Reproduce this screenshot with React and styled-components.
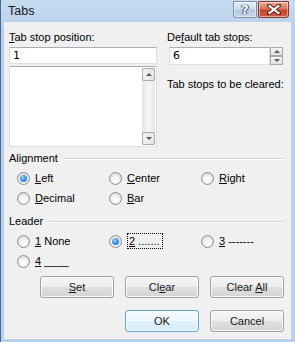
import React from "react";
import styled, { createGlobalStyle } from "styled-components";

const GlobalStyle = createGlobalStyle`
  html, body { margin:0; padding:0; background:#b9d1ea; }
  body {
    font-family: "Liberation Sans", Arial, sans-serif;
    font-size: 11px;
    color: #000;
  }
`;

const alignment = [
  { key: "L", rest: "eft", checked: true },
  { key: "C", rest: "enter" },
  { key: "R", rest: "ight" },
  { key: "D", rest: "ecimal" },
  { key: "B", rest: "ar" },
];

// Tabs dialog
function App() {
  return (
    <>
      <GlobalStyle />
      <Window>
        <TitleBar>
          <Title>Tabs</Title>
          <CaptionButtons>
            <CaptionButton kind="help">
              <HelpMark>?</HelpMark>
            </CaptionButton>
            <CaptionButton kind="close">
              <svg width="14" height="11" viewBox="0 0 14 11">
                <path d="M2 1.5 L12 9.5 M12 1.5 L2 9.5" stroke="#5a2218" strokeWidth="4" strokeLinecap="square" />
                <path d="M2.5 2 L11.5 9 M11.5 2 L2.5 9" stroke="#fff" strokeWidth="2.2" strokeLinecap="square" />
              </svg>
            </CaptionButton>
          </CaptionButtons>
        </TitleBar>

        <Client>
          <TopRow>
            <Column>
              <Label><Key>T</Key>ab stop position:</Label>
              <TextBox>1</TextBox>
              <ListBox>
                <ScrollBar>
                  <ScrollButton><Arrow up /></ScrollButton>
                  <ScrollButton><Arrow /></ScrollButton>
                </ScrollBar>
              </ListBox>
            </Column>
            <Column>
              <Label>De<Key>f</Key>ault tab stops:</Label>
              <Spinner>
                <SpinText>6</SpinText>
                <SpinButtons>
                  <SpinButton><Arrow up /></SpinButton>
                  <SpinButton><Arrow /></SpinButton>
                </SpinButtons>
              </Spinner>
              <Note>Tab stops to be cleared:</Note>
            </Column>
          </TopRow>

          <Group>
            <GroupHeading>Alignment<GroupLine /></GroupHeading>
            <RadioGrid>
              {alignment.map((item) => (
                <RadioItem key={item.key}>
                  <RadioCircle checked={item.checked} />
                  <span><Key>{item.key}</Key>{item.rest}</span>
                </RadioItem>
              ))}
            </RadioGrid>
          </Group>

          <Group leader>
            <GroupHeading>Leader<GroupLine /></GroupHeading>
            <RadioGrid>
              <RadioItem>
                <RadioCircle />
                <span><Key>1</Key> None</span>
              </RadioItem>
              <RadioItem>
                <RadioCircle checked />
                <FocusBox><Key>2</Key> .......</FocusBox>
              </RadioItem>
              <RadioItem>
                <RadioCircle />
                <span><Key>3</Key> -------</span>
              </RadioItem>
              <RadioItem>
                <RadioCircle />
                <span><Key>4</Key> ____</span>
              </RadioItem>
            </RadioGrid>
          </Group>

          <ButtonRow>
            <Button><span><Key>S</Key>et</span></Button>
            <Button><span>Cl<Key>e</Key>ar</span></Button>
            <Button><span>Clear <Key>A</Key>ll</span></Button>
          </ButtonRow>
          <ButtonRow last>
            <Button isDefault>OK</Button>
            <Button>Cancel</Button>
          </ButtonRow>
        </Client>
      </Window>
    </>
  );
}

export default App;

const Window = styled.div`
  width:295px;
  height:342px;
  box-sizing:border-box;
  display:flex;
  flex-direction:column;
  padding:0 4px 3px 3px;
  border-left:1px solid #4a6890;
  background:linear-gradient(#c6daf0, #b9d1ea 30px);
`
const TitleBar = styled.div`
  height:22px;
  display:flex;
  align-items:flex-start;
  justify-content:space-between;
  padding-left:4px;
`
const Title = styled.div`
  font-family:"Liberation Sans", Arial, sans-serif;
  font-size:12.5px;
  line-height:22px;
  color:#1a1a1a;
`
const CaptionButtons = styled.div`
  display:flex;
  gap:1px;
  padding-top:1px;
  margin-right:2px;
`
const CaptionButton = styled.div`
  width:${(p) => (p.kind === "close" ? "31px" : "24px")};
  height:17px;
  box-sizing:border-box;
  display:flex;
  align-items:center;
  justify-content:center;
  border:1px solid ${(p) => (p.kind === "close" ? "#8d3a2c" : "#7f93ab")};
  border-radius:${(p) => (p.kind === "close" ? "0 0 3px 0" : "0 0 0 3px")};
  background:${(p) =>
    p.kind === "close"
      ? "linear-gradient(#eab0a2, #d9735f 45%, #c4442e 55%, #d0604a)"
      : "linear-gradient(#e4edf7, #cddcec 45%, #b5c8de 55%, #c5d6ea)"};
  box-shadow:inset 0 0 0 1px rgba(255,255,255,0.45);
`
const HelpMark = styled.span`
  font-family:"DejaVu Sans", sans-serif;
  font-weight:bold;
  font-size:13px;
  line-height:13px;
  color:#fff;
  text-shadow:0 0 1px #2d3f55, 0 0 1px #2d3f55, 1px 0 0 #4a5e78, -1px 0 0 #4a5e78;
`
const Client = styled.div`
  flex:1;
  background:#f0f0f0;
  padding:8px 7px 0 5px;
  display:flex;
  flex-direction:column;
`
const TopRow = styled.div`
  display:grid;
  grid-template-columns:148px 1fr;
  column-gap:10px;
`
const Column = styled.div`
  display:flex;
  flex-direction:column;
`
const Label = styled.div`
  height:15px;
  line-height:15px;
  margin-bottom:2px;
  white-space:nowrap;
`
const Key = styled.span`
  text-decoration:underline;
  text-underline-offset:1px;
`
const TextBox = styled.div`
  height:17px;
  box-sizing:border-box;
  border:1px solid #dbdfe6;
  border-top-color:#abadb3;
  background:#fff;
  padding-left:3px;
  font-family:"DejaVu Sans", sans-serif;
  font-size:11px;
  line-height:15px;
`
const ListBox = styled.div`
  margin-top:2px;
  height:81px;
  box-sizing:border-box;
  border:1px solid #dbdfe6;
  border-top-color:#abadb3;
  background:#fff;
  display:flex;
  justify-content:flex-end;
  padding:1px;
`
const ScrollBar = styled.div`
  width:13px;
  display:flex;
  flex-direction:column;
  justify-content:space-between;
  background:linear-gradient(90deg, #e3e3e3, #f3f3f3 40%, #f3f3f3 60%, #e6e6e6);
`
const ScrollButton = styled.div`
  height:13px;
  box-sizing:border-box;
  border:1px solid #a8a8a8;
  border-radius:2px;
  background:linear-gradient(90deg, #f2f2f2, #e6e6e6);
  display:flex;
  align-items:center;
  justify-content:center;
`
const Arrow = styled.span`
  width:0;
  height:0;
  border-left:3px solid transparent;
  border-right:3px solid transparent;
  ${(p) => (p.up ? "border-bottom:3px solid #5a5a5a;" : "border-top:3px solid #5a5a5a;")}
`
const Spinner = styled.div`
  display:flex;
  height:18px;
  margin-left:2px;
  margin-right:1px;
`
const SpinText = styled(TextBox)`
  flex:1;
  height:18px;
  line-height:16px;
`
const SpinButtons = styled.div`
  width:13px;
  display:flex;
  flex-direction:column;
`
const SpinButton = styled.div`
  flex:1;
  box-sizing:border-box;
  border:1px solid #a9a9a9;
  background:linear-gradient(#f6f6f6, #e0e0e0);
  display:flex;
  align-items:center;
  justify-content:center;
`
const Note = styled.div`
  margin-top:13px;
  white-space:nowrap;
`
const Group = styled.div`
  margin-top:${(p) => (p.leader ? "6px" : "4px")};
`
const GroupHeading = styled.div`
  display:flex;
  align-items:center;
  gap:6px;
  height:15px;
  line-height:15px;
  margin-bottom:${(p) => (p.leader ? "3px" : "2px")};
`
const GroupLine = styled.div`
  flex:1;
  height:0;
  border-top:1px solid #d5d5d5;
  border-bottom:1px solid #fff;
`
const RadioGrid = styled.div`
  display:grid;
  grid-template-columns:repeat(3, 92px);
  grid-auto-rows:20px;
  padding-left:8px;
  margin-top:2px;
`
const RadioItem = styled.div`
  display:flex;
  align-items:center;
  gap:5px;
  white-space:nowrap;
`
const RadioCircle = styled.span`
  width:13px;
  height:13px;
  box-sizing:border-box;
  border-radius:50%;
  border:1px solid #8f8f8f;
  background:radial-gradient(circle at 50% 60%, #ffffff 20%, #e6e6e6 60%, #cfcfcf 100%);
  display:flex;
  align-items:center;
  justify-content:center;
  &::after {
    content:"";
    display:${(p) => (p.checked ? "block" : "none")};
    width:7px;
    height:7px;
    border-radius:50%;
    background:radial-gradient(circle at 40% 35%, #9fd6ff, #2f8ee0 55%, #1a5fa8);
  }
`
const FocusBox = styled.span`
  border:1px dotted #000;
  padding:0 2px 0 1px;
  line-height:14px;
`
const ButtonRow = styled.div`
  display:flex;
  justify-content:flex-end;
  gap:11px;
  margin-top:${(p) => (p.last ? "12px" : "5px")};
`
const Button = styled.div`
  width:74px;
  height:22px;
  box-sizing:border-box;
  border:1px solid ${(p) => (p.isDefault ? "#5aa9cf" : "#a0a0a0")};
  border-radius:3px;
  background:${(p) =>
    p.isDefault
      ? "linear-gradient(#f4fbfe, #ecf7fd 50%, #dff1fb 51%, #d6ecf8)"
      : "linear-gradient(#f6f6f6, #ececec 50%, #dfdfdf 51%, #d4d4d4)"};
  box-shadow:inset 0 0 0 1px rgba(255,255,255,0.8);
  display:flex;
  align-items:center;
  justify-content:center;
  color:#1a1a1a;
`
